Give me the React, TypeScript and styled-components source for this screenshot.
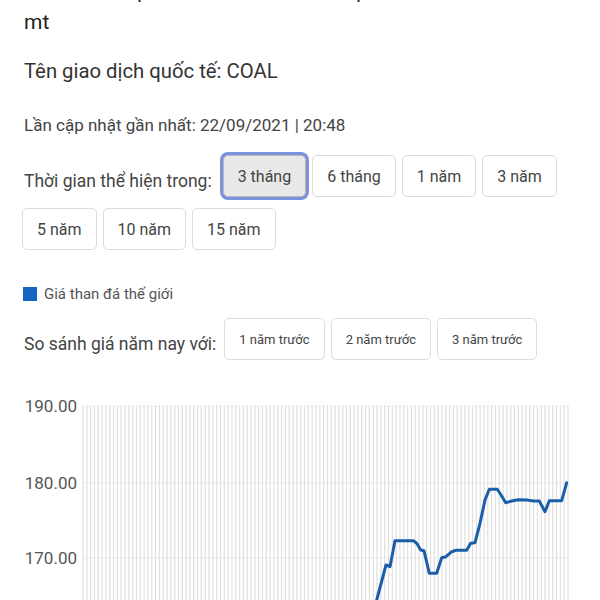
import React from "react";
import styled, { createGlobalStyle } from "styled-components";

const GlobalStyle = createGlobalStyle`
  html, body {
    margin: 0;
    padding: 0;
    background: #ffffff;
    overflow: hidden;
  }
  body {
    font-family: Roboto, "Noto Sans", sans-serif;
    color: #333;
  }
`;

const Page = styled.div`
  padding: 0 22px;
`;

const Heading = styled.h1`
  margin: -23px 0 0 2px;
  font-size: 21px;
  line-height: 30px;
  font-weight: 400;
  color: #222;
`;

const SubTitle = styled.p`
  margin: 20px 0 0 2px;
  font-size: 20.3px;
  line-height: 28px;
  color: #333;
`;

const Updated = styled.p`
  margin: 28px 0 0 2px;
  font-size: 17px;
  line-height: 24px;
  color: #444;
`;

const ButtonRow = styled.div<{ $top: number }>`
  display: flex;
  flex-wrap: wrap;
  align-items: center;
  column-gap: 6px;
  row-gap: 11px;
  margin-top: ${(p) => p.$top}px;
`;

const RowLabel = styled.span`
  margin: 0 2px 0 2px;
  padding-top: 9px;
  font-size: 17.5px;
  color: #444;
`;

const RangeButton = styled.button<{ $active?: boolean; $small?: boolean }>`
  height: 42px;
  padding: 0 14px;
  border: 1px solid ${(p) => (p.$active ? "#b8b8b8" : "#dcdcdc")};
  border-radius: 5px;
  background: ${(p) => (p.$active ? "#e8e8e8" : "#fff")};
  box-shadow: ${(p) => (p.$active ? "0 0 0 3px #7d92dc" : "none")};
  margin-left: ${(p) => (p.$active ? "3px" : "0")};
  font-family: Roboto, "Noto Sans", sans-serif;
  font-size: ${(p) => (p.$small ? "13px" : "16px")};
  color: #444;
  cursor: pointer;
`;

const Legend = styled.div`
  display: flex;
  align-items: center;
  gap: 7px;
  margin: 34px 0 0 1px;
  font-size: 15px;
  line-height: 20px;
  color: #555;
`;

const Swatch = styled.span`
  width: 14px;
  height: 14px;
  background: #1565c0;
`;

const ChartBox = styled.svg`
  display: block;
  margin-top: 30px;
`;

const ranges = ["3 tháng", "6 tháng", "1 năm", "3 năm", "5 năm", "10 năm", "15 năm"];
const compares = ["1 năm trước", "2 năm trước", "3 năm trước"];

const linePoints: [number, number][] = [
  [371, 625], [376.7, 600], [386, 565], [390, 566.7], [395, 540.7], [413.3, 540.7],
  [416.7, 543.3], [420.7, 550], [424, 550.7], [429.3, 573.3], [436.7, 573.3],
  [441.7, 557.7], [446, 556.7], [451.7, 551.7], [456, 550.3], [466.7, 550.3],
  [470.7, 543.3], [475, 542.7], [480, 523.3], [485, 500], [489.3, 489.3],
  [497.3, 489.3], [501.7, 496], [505.7, 502.7], [511.7, 501], [518.3, 499.7],
  [526.7, 500], [533.3, 501], [539.3, 501], [545, 511.7], [549.3, 500.7],
  [561.7, 500.7], [566.7, 482.7],
];

const Chart = () => {
  const left = 83;
  const right = 568;
  const count = 128;
  const step = (right - left) / (count - 1);
  const verticals = Array.from({ length: count }, (_, i) => left + i * step);
  const levels = [
    { label: "190.00", y: 406 },
    { label: "180.00", y: 483 },
    { label: "170.00", y: 558 },
    { label: "160.00", y: 634 },
  ];
  return (
    <ChartBox width={556} height={300} viewBox="22 390 556 300">
      {levels.map((l) => (
        <line key={l.label} x1={left} x2={right} y1={l.y} y2={l.y} stroke="#ececec" strokeWidth={1} />
      ))}
      {verticals.map((x, i) => (
        <line key={i} x1={x} x2={x} y1={406} y2={690} stroke="#dfdfdf" strokeWidth={1.2} />
      ))}
      {levels.map((l) => (
        <text
          key={`t${l.label}`}
          x={77}
          y={l.y + 6}
          textAnchor="end"
          fontSize={17}
          fill="#555"
          fontFamily="Roboto, sans-serif"
        >
          {l.label}
        </text>
      ))}
      <polyline
        points={linePoints.map((p) => p.join(",")).join(" ")}
        fill="none"
        stroke="#1b5ea8"
        strokeWidth={3}
        strokeLinejoin="round"
        strokeLinecap="round"
      />
    </ChartBox>
  );
};

const App = () => {
  return (
    <>
      <GlobalStyle />
      <Page>
        <Heading>
          Than đá nhiệt - Thermal Coal. Đơn vị tính: USD/
          <br />
          mt
        </Heading>
        <SubTitle>Tên giao dịch quốc tế: COAL</SubTitle>
        <Updated>Lần cập nhật gần nhất: 22/09/2021 | 20:48</Updated>
        <ButtonRow $top={18}>
          <RowLabel>Thời gian thể hiện trong:</RowLabel>
          {ranges.map((r, i) => (
            <RangeButton key={r} $active={i === 0}>
              {r}
            </RangeButton>
          ))}
        </ButtonRow>
        <Legend>
          <Swatch />
          Giá than đá thế giới
        </Legend>
        <ButtonRow $top={14}>
          <RowLabel>So sánh giá năm nay với:</RowLabel>
          {compares.map((c) => (
            <RangeButton key={c} $small>
              {c}
            </RangeButton>
          ))}
        </ButtonRow>
        <Chart />
      </Page>
    </>
  );
};

export default App;
